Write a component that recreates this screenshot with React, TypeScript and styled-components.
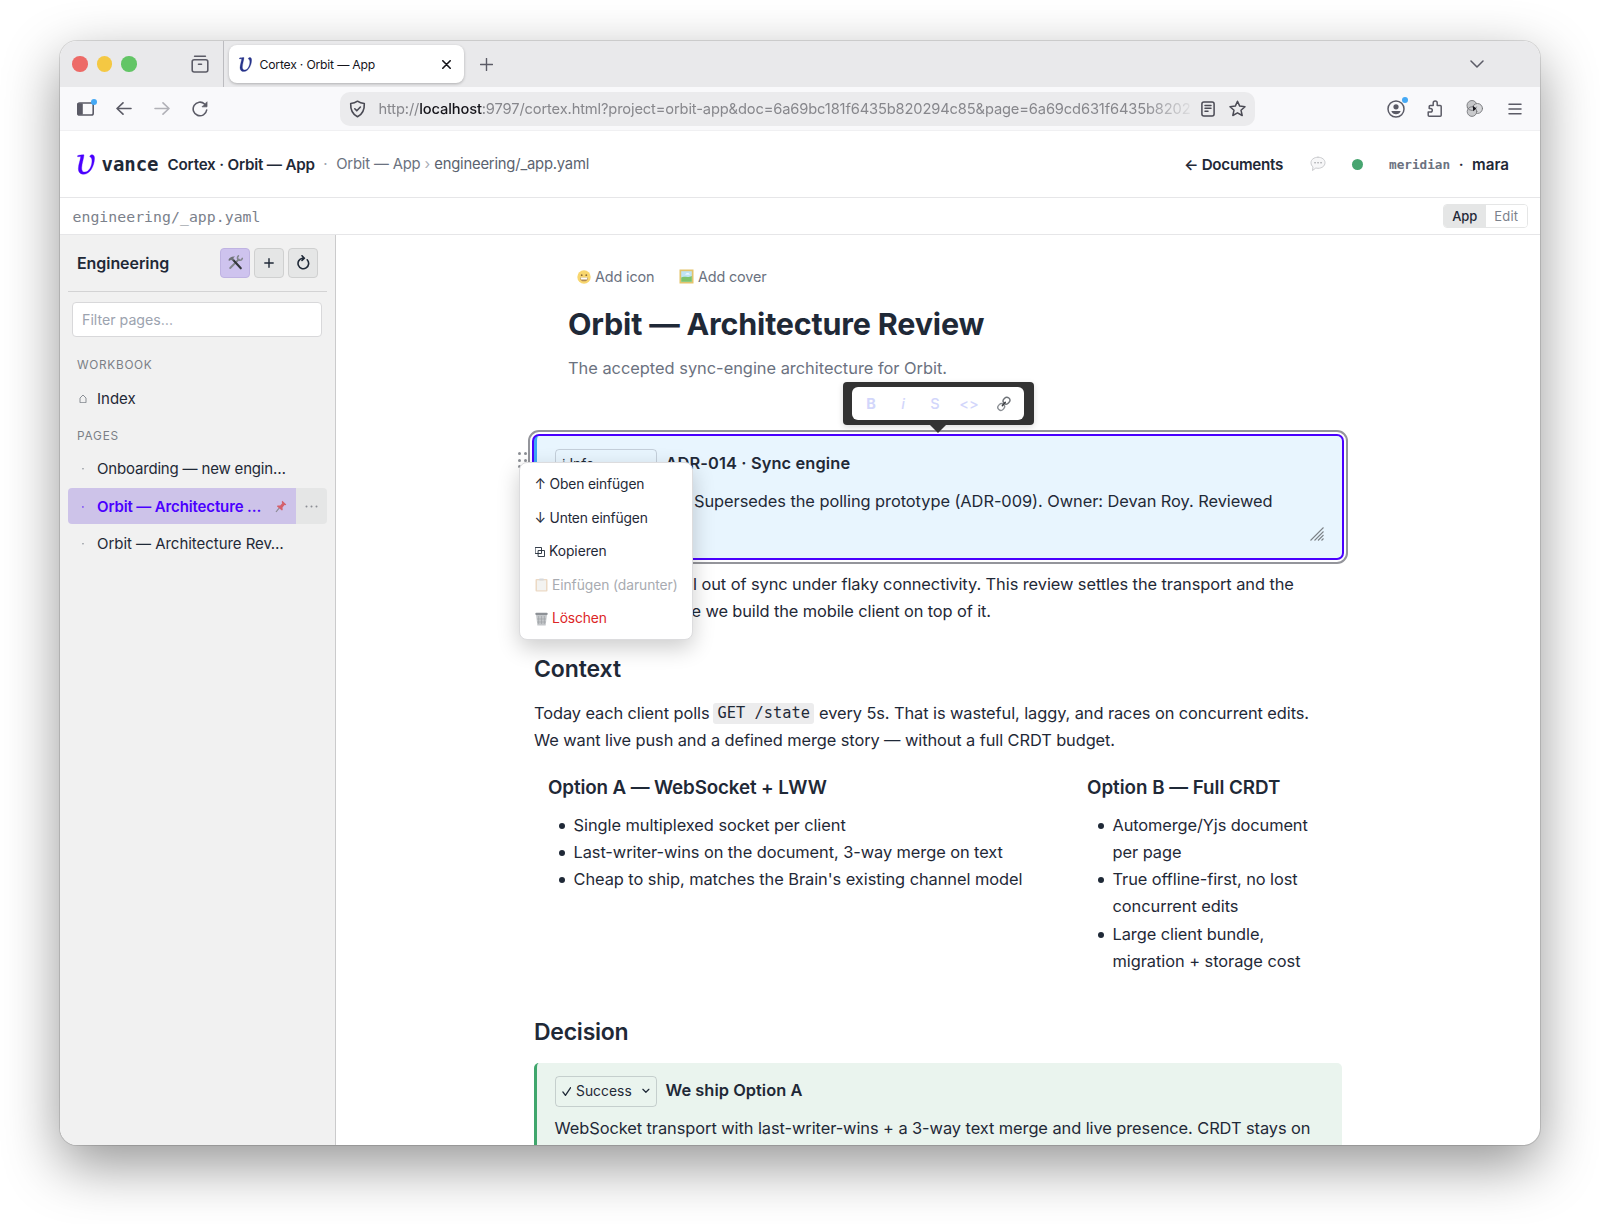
import React from "react";
import styled, { createGlobalStyle, css } from "styled-components";

const sans = `Inter, "Liberation Sans", sans-serif`;
const mono = `"DejaVu Sans Mono", monospace`;
const ink = "#1f2937";
const muted = "#6b7280";
const violet = "#4a00ff";

const GlobalStyle = createGlobalStyle`
  *, *::before, *::after { box-sizing: border-box; }
  body { margin: 0; background: #fff; font-family: ${sans}; color: ${ink}; }
`;

const Stage = styled.div`
  width: 1600px;
  height: 1224px;
  padding: 41px 60px 79px;
  overflow: hidden;
`;
const Window = styled.div`
  height: 1104px;
  display: flex;
  flex-direction: column;
  border-radius: 17px;
  overflow: hidden;
  background: #fff;
  box-shadow: 0 0 0 1px rgba(0, 0, 0, 0.12), 0 20px 56px rgba(0, 0, 0, 0.42);
`;
const Text = styled.span<{ $ls?: number }>`
  white-space: nowrap;
  letter-spacing: ${(p) => p.$ls ?? 0}px;
`;

/* ---------- tab strip ---------- */
const TabStrip = styled.div`
  flex: none;
  height: 46px;
  display: flex;
  align-items: center;
  background: #e9e9eb;
  padding-left: 12px;
  color: #5b5b66;
`;
const Light = styled.i<{ $c: string }>`
  width: 15.5px;
  height: 15.5px;
  margin-right: 9px;
  border-radius: 50%;
  background: ${(p) => p.$c};
`;
const StripIcon = styled.span<{ $ml?: string }>`
  display: flex;
  margin-left: ${(p) => p.$ml ?? "0"};
`;
const StripRule = styled.i`
  width: 1px;
  height: 46px;
  margin: 0 5px 0 14px;
  background: #bcbcc0;
`;
const Tab = styled.div`
  width: 235px;
  height: 38px;
  padding: 0 13px 0 10px;
  display: flex;
  align-items: center;
  gap: 8px;
  border-radius: 8px;
  background: #fff;
  box-shadow: 0 1px 3px rgba(0, 0, 0, 0.25);
  color: #15141a;
  font-size: 12.2px;
`;
const Push = styled.i`
  flex: 1;
`;

/* ---------- nav bar ---------- */
const NavBar = styled.div`
  flex: none;
  height: 43px;
  padding: 0 18px 0 17px;
  display: flex;
  align-items: center;
  background: #f9f9fb;
  color: #5b5b66;
`;
const NavIcon = styled.span<{ $mr?: number; $faint?: boolean }>`
  position: relative;
  display: flex;
  margin-right: ${(p) => p.$mr ?? 0}px;
  opacity: ${(p) => (p.$faint ? 0.45 : 1)};
`;
const Ping = styled.i`
  position: absolute;
  right: -3px;
  top: -3px;
  width: 6.5px;
  height: 6.5px;
  border-radius: 50%;
  background: #45a9f5;
`;
const UrlBar = styled.div`
  width: 915px;
  height: 34px;
  margin: 0 auto 0 0;
  padding: 0 9px 0 9px;
  display: flex;
  align-items: center;
  border-radius: 10px;
  background: #ebebed;
  font-size: 14.7px;
  color: #87878c;
`;
const UrlIcon = styled(NavIcon)`
  color: #4a4a54;
`;
const Url = styled.div`
  width: 815px;
  margin: 0 7px 0 12.5px;
  overflow: hidden;
  white-space: nowrap;
  mask-image: linear-gradient(90deg, #000 765px, transparent 818px);
`;
const Host = styled.b`
  font-weight: 500;
  color: #15141a;
`;

/* ---------- app header ---------- */
const AppHeader = styled.header`
  flex: none;
  height: 68px;
  padding: 0 31px 0 17px;
  display: flex;
  align-items: center;
  border-top: 1px solid #f0f0f2;
  border-bottom: 1px solid #e6e6e8;
`;
const Brand = styled.span`
  margin: 0 9px 0 6.5px;
  font: 700 19px ${mono};
`;
const HeadText = styled(Text)<{ $c?: string; $ml?: number }>`
  font-size: 14.8px;
  color: ${(p) => p.$c ?? ink};
  margin-left: ${(p) => p.$ml ?? 0}px;
`;
const HeadStrong = styled(HeadText)`
  font-size: 15.2px;
  font-weight: 600;
`;
const OnlineDot = styled.i`
  width: 11px;
  height: 11px;
  margin: 0 26px 0 26px;
  border-radius: 50%;
  background: #47a570;
`;
const Tenant = styled.span`
  font: 700 12.7px ${mono};
  color: ${muted};
`;

/* ---------- file bar ---------- */
const FileBar = styled.div`
  flex: none;
  height: 37px;
  padding: 0 12px 0 12.5px;
  display: flex;
  align-items: center;
  justify-content: space-between;
  border-bottom: 1px solid #e6e6e8;
  font: 14.8px ${mono};
  color: #7b818b;
`;
const Toggle = styled.div`
  display: flex;
  height: 24px;
  border: 1px solid #e5e6e6;
  border-radius: 4px;
  overflow: hidden;
  font-family: ${sans};
  font-size: 13px;
`;
const ToggleItem = styled.span<{ $on?: boolean }>`
  width: 41.5px;
  display: flex;
  align-items: center;
  justify-content: center;
  background: ${(p) => (p.$on ? "#e5e6e6" : "#fff")};
  color: ${(p) => (p.$on ? ink : "#7b818b")};
  font-weight: ${(p) => (p.$on ? 500 : 400)};
`;

/* ---------- body ---------- */
const Body = styled.div`
  flex: 1;
  min-height: 0;
  display: flex;
`;
const Sidebar = styled.aside`
  flex: none;
  width: 276px;
  padding: 0 8px;
  background: #f1f1f1;
  border-right: 1px solid #cbcbcc;
`;
const SideHead = styled.div`
  height: 57px;
  padding: 0 9px 1px;
  display: flex;
  align-items: center;
  gap: 4px;
  border-bottom: 1.5px solid #d3d3d4;
`;
const SideTitle = styled(Text)`
  margin-right: auto;
  font-size: 16px;
  font-weight: 600;
`;
const ToolButton = styled.button<{ $on?: boolean }>`
  width: 30px;
  height: 30px;
  padding: 0;
  display: flex;
  align-items: center;
  justify-content: center;
  border: 1px solid ${(p) => (p.$on ? "#bfb3e2" : "#cfd0d0")};
  border-radius: 4px;
  background: ${(p) => (p.$on ? "#cec3ee" : "#e5e6e6")};
  color: ${ink};
`;
const Filter = styled.div`
  height: 35px;
  margin: 10px 5px 0 4px;
  padding: 0 9px;
  display: flex;
  align-items: center;
  border: 1px solid #d8d8da;
  border-radius: 4px;
  background: #fff;
  color: #9ca3af;
  font-size: 14.2px;
`;
const SideLabel = styled.div<{ $mt: number }>`
  height: 16px;
  line-height: 16px;
  margin: ${(p) => p.$mt}px 0 0 9px;
  font-size: 11.8px;
  color: #7b7f86;
`;
const SideRow = styled.div<{ $on?: boolean; $mt?: number }>`
  height: 36px;
  margin-top: ${(p) => p.$mt ?? 1.7}px;
  display: flex;
  border-radius: 4px;
  overflow: hidden;
  font-size: 15px;
  font-weight: ${(p) => (p.$on ? 600 : 400)};
  color: ${(p) => (p.$on ? violet : ink)};
`;
const RowMain = styled.div<{ $on?: boolean }>`
  flex: 1;
  display: flex;
  align-items: center;
  background: ${(p) => (p.$on ? "#cdc3e9" : "transparent")};
`;
const RowMark = styled.span`
  width: 29px;
  padding-left: 1px;
  display: flex;
  justify-content: center;
  opacity: 0.55;
  font-size: 12px;
`;
const PinSlot = styled.span`
  display: flex;
  margin-left: 14px;
`;
const RowMore = styled.span`
  width: 31px;
  display: flex;
  align-items: center;
  justify-content: center;
  background: #e5e6e6;
`;

/* ---------- document ---------- */
const Main = styled.main`
  flex: 1;
  min-width: 0;
  display: flex;
  justify-content: center;
`;
const Doc = styled.article`
  width: 808px;
  font-size: 16.4px;
  line-height: 27.2px;
`;
const DocHead = styled.div`
  padding: 26px 0 0 34px;
`;
const AddRow = styled.div`
  height: 32px;
  padding-left: 9px;
  display: flex;
  align-items: center;
  font-size: 14.4px;
  color: ${muted};
`;
const AddItem = styled.span`
  display: flex;
  align-items: center;
  gap: 4px;
  margin-right: 24.5px;
`;
const Title = styled.h1`
  height: 44px;
  margin: 9px 0 0;
  line-height: 44px;
  font-size: 30.5px;
  font-weight: 700;
`;
const Lead = styled.p`
  height: 24px;
  margin: 10px 0 56px;
  line-height: 24px;
  color: ${muted};
`;
const Callout = styled.section<{ $kind: "info" | "success" }>`
  position: relative;
  height: 122px;
  margin-top: ${(p) => (p.$kind === "success" ? 15 : 0)}px;
  padding: 13px 17.5px 0;
  border-left: 3px solid ${(p) => (p.$kind === "info" ? "#3ea6f5" : "#3fa66c")};
  border-radius: 5px;
  background: ${(p) => (p.$kind === "info" ? "#e8f5fe" : "#eaf4ee")};
  ${(p) =>
    p.$kind === "info" &&
    css`
      box-shadow: 0 0 0 2px ${violet};
      outline: 2px solid #94959b;
      outline-offset: 4px;
    `}
`;
const CalloutHead = styled.div`
  height: 31px;
  display: flex;
  gap: 9px;
`;
const Kind = styled.span`
  width: 102px;
  height: 31px;
  padding: 0 6px;
  display: flex;
  align-items: center;
  gap: 5px;
  border: 1px solid rgba(31, 41, 55, 0.18);
  border-radius: 4px;
  font-size: 13.8px;
`;
const CalloutTitle = styled(Text)`
  font-weight: 600;
  line-height: 28px;
`;
const Line = styled.div<{ $mt?: number }>`
  display: flex;
  height: 27.2px;
  margin-top: ${(p) => p.$mt ?? 0}px;
  white-space: pre;
`;
const Indent = styled.i<{ $w: number }>`
  flex: none;
  width: ${(p) => p.$w}px;
`;
const ResizeGrip = styled.svg`
  position: absolute;
  right: 18px;
  bottom: 17px;
`;
const H2 = styled.h2<{ $mt: number }>`
  height: 32px;
  margin: ${(p) => p.$mt}px 0 0;
  line-height: 32px;
  font-size: 23px;
  font-weight: 600;
`;
const Code = styled.code`
  height: 21px;
  margin: 3px 5px 0 4px;
  padding: 0 4px;
  border-radius: 3px;
  background: #ececed;
  font: 15.3px/21px ${mono};
`;
const Columns = styled.div`
  display: flex;
  gap: 52px;
  height: 201px;
  margin-top: 19.6px;
  padding: 0 14px;
`;
const Column = styled.div<{ $w: number }>`
  width: ${(p) => p.$w}px;
`;
const H3 = styled.h3`
  height: 28px;
  margin: 0 0 10px;
  line-height: 28px;
  font-size: 18.8px;
  font-weight: 600;
`;
const List = styled.ul`
  margin: 0;
  padding: 0;
  list-style: none;
`;
const Item = styled.li`
  display: flex;
  &::before {
    content: "";
    flex: none;
    width: 6px;
    height: 6px;
    margin: 11px 9px 0 10.5px;
    border-radius: 50%;
    background: ${ink};
  }
`;
const ItemBody = styled.div`
  display: flex;
  flex-direction: column;
  letter-spacing: -0.06px;
`;

/* ---------- overlays ---------- */
const DragDots = styled.div`
  position: absolute;
  left: -19.5px;
  top: 16px;
  display: grid;
  grid-template-columns: 3px 3px;
  gap: 3.6px 3px;
`;
const DragDot = styled.i`
  width: 3px;
  height: 3px;
  border-radius: 50%;
  background: #8c8f95;
`;
const Bubble = styled.div`
  position: absolute;
  left: 305.5px;
  top: -54px;
  width: 191px;
  height: 43px;
  padding: 5px 9.5px;
  border-radius: 4px;
  background: #333;
  box-shadow: 0 2px 6px rgba(0, 0, 0, 0.14);
  &::after {
    content: "";
    position: absolute;
    left: 87.5px;
    top: 43px;
    border: 8px solid transparent;
    border-top-color: #333;
    border-bottom-width: 0;
  }
`;
const BubbleInner = styled.div`
  height: 33px;
  padding: 0 3px;
  display: grid;
  grid-template-columns: 32px 32px 32px 36px 33px;
  align-items: center;
  justify-items: center;
  border-radius: 6px;
  background: #fff;
  color: #d2d6fb;
  font-size: 14.5px;
  font-weight: 500;
  line-height: 33px;
`;
const Menu = styled.div`
  position: absolute;
  z-index: 2;
  left: -18px;
  top: 26px;
  width: 174px;
  height: 178px;
  padding: 5px 0;
  border: 1px solid #dcdcde;
  border-radius: 8px;
  background: #fff;
  box-shadow: 0 8px 22px rgba(0, 0, 0, 0.2);
  font-size: 13.8px;
`;
const MenuItem = styled.div<{ $tone?: string; $gap?: number }>`
  height: 33.5px;
  padding-left: 14.5px;
  display: flex;
  align-items: center;
  gap: ${(p) => p.$gap ?? 4.5}px;
  color: ${(p) => p.$tone ?? ink};
`;

/* ---------- drawings ---------- */
const Svg = ({ w, h = w, sw = 1.5, children }: { w: number; h?: number; sw?: number; children: React.ReactNode }) => (
  <svg width={w} height={h} viewBox={`0 0 ${w} ${h}`} fill="none" stroke="currentColor" strokeWidth={sw} strokeLinecap="round" strokeLinejoin="round">
    {children}
  </svg>
);
const Logo = ({ w, h, color }: { w: number; h: number; color: string }) => (
  <svg width={w} height={h} viewBox="0 0 18.500 21" fill={color} stroke={color} strokeWidth=".35">
    <path d="M.6 1.4C2 .9 4.600.6 7.200.6 7 4.500 4.900 9.500 4.800 14c0 3 1.100 4.300 3.300 4.300 4.200 0 7.200-6 7.300-11.300 0-2.300-.6-3.700-2.400-4.700C13.400 1 14.700.4 15.800.5c1.700.2 2.300 1.900 2.200 4.100C17.700 12 13.300 20.500 7.200 20.500 3.300 20.500 1.300 18.500 1.400 14.600 1.500 10.500 3.500 6 3.800 2.400L.6 2.500z" />
  </svg>
);
const Tools = () => (
  <svg width="17" height="17" viewBox="0 0 17 17" fill="none" strokeLinecap="round">
    <path d="M3.200 14 11.800 5.400" stroke="#82868b" strokeWidth="1.900" />
    <path d="M11.400 1.800c-1.500 1.300-1.200 4 .9 4.300 1.300.3 2.600-.4 3-1.700" stroke="#82868b" strokeWidth="1.600" />
    <path d="m6.500 6.300 7.300 8" stroke="#34373b" strokeWidth="2.100" />
    <path d="M1.300 6.200C2.300 3.600 4.600 2.300 8 2.600L6.300 4l.9 1.700-1.500 1.400-1.600-1.300-1.500 1z" fill="#6d7176" />
  </svg>
);
const Smile = () => (
  <svg width="14" height="14" viewBox="0 0 14 14">
    <circle cx="7" cy="7" r="6.700" fill="#f8d66e" />
    <circle cx="4.700" cy="5.200" r=".9" fill="#8a6a3a" />
    <circle cx="9.300" cy="5.200" r=".9" fill="#8a6a3a" />
    <path d="M3 7.400h8c0 2.600-1.700 3.900-4 3.900S3 10 3 7.400z" fill="#b08a55" />
    <path d="M3.500 7.600h7l-.5 1.900H4z" fill="#fff" />
  </svg>
);
const Frame = () => (
  <svg width="15" height="15" viewBox="0 0 15 15">
    <rect x=".5" y=".5" width="14" height="14" fill="#e3c46b" />
    <rect x="2.200" y="2.200" width="10.600" height="10.600" fill="#bfe3f2" />
    <path d="M2.200 8.500c3-2 6 .8 10.600-1.500v5.800H2.200z" fill="#7fc469" />
    <path d="M6 5.500c2-2 4-1 5 0z" fill="#fff" />
  </svg>
);
const Pin = () => (
  <svg width="12" height="13" viewBox="0 0 12 13">
    <path d="m1 12 4-5" stroke="#8c8a94" strokeWidth="1.200" />
    <path d="m7.300.8 4 3.600-1 .8-.8-.2-2 2.400.2 2.600-.8.6L1.800 6.200l.8-.7 2.600.1 2-2.300-.5-1.200z" fill="#d4606b" />
  </svg>
);
const Link = () => (
  <Svg w={16} sw={1.4}>
    <rect x="7" y="1.700" width="7" height="6" rx="3" transform="rotate(-48 10.500 4.700)" stroke="#6f7378" />
    <rect x="1.700" y="8" width="7" height="6" rx="3" transform="rotate(-48 5.200 11)" stroke="#8b8f94" />
    <path d="m6.300 9.700 3-3.500" stroke="#3a3d41" />
  </Svg>
);
const Chat = () => (
  <Svg w={16} sw={1}>
    <path d="M8 1.200c4 0 7 2.300 7 5.500s-3 5.600-7 5.600c-.8 0-1.500-.1-2.200-.3L2.500 14.500l.5-3.600C1.700 9.900 1 8.400 1 6.700c0-3.200 3-5.500 7-5.500z" fill="#f7f7f8" stroke="#c9cacd" />
    <path d="M5 6.700h.1M8 6.700h.1M11 6.700h.1" stroke="#9b9da2" strokeWidth={1.5} />
  </Svg>
);
const Clipboard = () => (
  <svg width="13" height="14" viewBox="0 0 13 14">
    <rect x=".5" y="1" width="12" height="12.500" rx="1" fill="#ecd9c4" />
    <rect x="2" y="2.300" width="9" height="10" fill="#f3f3f1" />
    <rect x="4" y=".4" width="5" height="2" rx="1" fill="#d7d9dc" />
  </svg>
);
const Bin = () => (
  <svg width="13" height="14" viewBox="0 0 13 14">
    <path d="M1 2.500h11l-1.400 11H2.400z" fill="#c3c6c9" />
    <path d="M3.600 4v8M6.500 4v8M9.400 4v8M2 7h9M2.300 10h8.500" stroke="#9a9ea3" strokeWidth=".6" />
    <rect x=".3" y=".8" width="12.400" height="2.200" rx="1" fill="#8d9196" />
  </svg>
);
const Copies = () => (
  <Svg w={10} sw={0.9}>
    <rect x=".5" y=".5" width="6" height="6" />
    <rect x="3.500" y="3.500" width="6" height="6" />
  </Svg>
);

export default function App() {
  return (
    <>
      <GlobalStyle />
      <Stage>
        <Window>
          <TabStrip>
            <Light $c="#ed6a67" />
            <Light $c="#f4c843" />
            <Light $c="#63c566" />
            <StripIcon $ml="45px">
              <Svg w={18} h={18} sw={1.6}>
                <rect x="1.200" y="4.800" width="15.600" height="12.200" rx="2" />
                <path d="M3.600 1.300h10.800M7.500 9.300h3" />
              </Svg>
            </StripIcon>
            <StripRule />
            <Tab>
              <Logo w={13} h={15} color="#27348b" />
              <Text $ls={-0.2}>Cortex · Orbit — App</Text>
              <Push />
              <Svg w={9} sw={1.6}><path d="m.8.8 7.400 7.400M8.200.8.8 8.200" /></Svg>
            </Tab>
            <StripIcon $ml="16px"><Svg w={13} sw={1.4}><path d="M6.500.5v12M.5 6.500h12" /></Svg></StripIcon>
            <Push />
            <StripIcon><Svg w={14} h={8} sw={1.5}><path d="m1 1 6 6 6-6" /></Svg></StripIcon>
            <Indent $w={56.5} />
          </TabStrip>

          <NavBar>
            <NavIcon $mr={21.5}>
              <Svg w={17} h={14} sw={1.6}>
                <rect x=".8" y="1" width="15.400" height="12" rx="1.800" />
                <path d="M1 2h4v10H1z" fill="currentColor" />
              </Svg>
              <Ping />
            </NavIcon>
            <NavIcon $mr={22.5}><Svg w={16} h={13} sw={1.6}><path d="M15 6.500H1M7 .8 1 6.500l6 5.700" /></Svg></NavIcon>
            <NavIcon $mr={22} $faint><Svg w={16} h={13} sw={1.6}><path d="M1 6.500h14M9 .8l6 5.700-6 5.700" /></Svg></NavIcon>
            <NavIcon $mr={132}>
              <Svg w={16} sw={1.6}>
                <path d="M14.700 9A6.800 6.800 0 1 1 12.600 3" />
                <path d="M15 1.200v4.600h-4.600z" fill="currentColor" strokeWidth={0.8} />
              </Svg>
            </NavIcon>
            <UrlBar>
              <UrlIcon><Svg w={17} h={18} sw={1.6}><path d="M8.500 1.200c2 1.500 4 2.200 6.800 2.300.3 6-1.300 10.500-6.800 13.300C3 14 1.400 9.500 1.700 3.500c2.800-.1 4.800-.8 6.800-2.300zM5.800 8.800l2 2 3.600-3.800" /></Svg></UrlIcon>
              <Url>
                <Text $ls={-0.145}>http://<Host>localhost</Host>:9797/cortex.html?project=orbit-app&amp;doc=6a69bc181f6435b820294c85&amp;page=6a69cd631f6435b8202</Text>
              </Url>
              <UrlIcon $mr={14.5}><Svg w={14} h={16} sw={1.5}><rect x=".9" y=".9" width="12.200" height="14.200" rx="2" /><path d="M4 4.500h6M4 7.300h6M4 10.200h3" /></Svg></UrlIcon>
              <UrlIcon><Svg w={17} sw={1.5}><path d="m8.500 1.200 2.200 4.900 5.300.6-4 3.500 1.200 5.300-4.700-2.700-4.700 2.700L5 10.200 1 6.700l5.300-.6z" /></Svg></UrlIcon>
            </UrlBar>
            <NavIcon $mr={22}>
              <Svg w={18} sw={1.5}>
                <circle cx="9" cy="9" r="8" />
                <circle cx="9" cy="6.800" r="2.600" fill="currentColor" stroke="none" />
                <path d="M4.300 11h9.400c-.8 2.200-2.500 3.300-4.700 3.300S5.100 13.200 4.300 11z" fill="currentColor" stroke="none" />
              </Svg>
              <Ping />
            </NavIcon>
            <NavIcon $mr={24}>
              <Svg w={15} h={17} sw={1.5}>
                <path d="M2.200 16.200h11a1 1 0 0 0 1-1V6.500a1 1 0 0 0-1-1h-3V3a2 2 0 0 0-4 0v2.500h-3a1 1 0 0 0-1 1v2h1.300a1.700 1.700 0 0 1 0 3.600H1.200v3.100a1 1 0 0 0 1 1z" />
              </Svg>
            </NavIcon>
            <NavIcon $mr={25}>
              <Svg w={17} h={17} sw={0.9}>
                <g stroke="#77787c">
                  <circle cx="6" cy="5.500" r="5" fill="#c5c6c8" />
                  <circle cx="11.500" cy="8.500" r="5" fill="#d6d7d9" />
                  <circle cx="6" cy="11.600" r="4.800" fill="#c9cacc" />
                  <path d="M1.300 7.500a5 5 0 0 0 9.300-.5" />
                </g>
                <path d="m6.800 5.800 3.500 2.700-3.100 2.700z" fill="#15141a" stroke="none" />
              </Svg>
            </NavIcon>
            <NavIcon><Svg w={14} h={12} sw={1.5}><path d="M1 1.200h12M1 6h12M1 10.800h12" /></Svg></NavIcon>
          </NavBar>

          <AppHeader>
            <Logo w={18} h={21} color={violet} />
            <Brand><Text $ls={-0.04}>vance</Text></Brand>
            <HeadStrong $ls={-0.2}>Cortex · Orbit — App</HeadStrong>
            <HeadText $c="#9ca3af" $ml={8.5}>·</HeadText>
            <HeadText $c={muted} $ml={8.5} $ls={-0.15}>Orbit — App</HeadText>
            <HeadText $c="#a9adb5" $ml={4}>›</HeadText>
            <HeadText $c="#5b6370" $ml={4} $ls={-0.2}>engineering/_app.yaml</HeadText>
            <Push />
            <HeadStrong $ls={-0.28}>← Documents</HeadStrong>
            <Indent $w={27} />
            <Chat />
            <OnlineDot />
            <Tenant>meridian</Tenant>
            <HeadStrong $ml={8.5}>·</HeadStrong>
            <HeadStrong $ml={8.5}>mara</HeadStrong>
          </AppHeader>

          <FileBar>
            <Text $ls={0.044}>engineering/_app.yaml</Text>
            <Toggle>
              <ToggleItem $on><Text $ls={-0.1}>App</Text></ToggleItem>
              <ToggleItem><Text $ls={0.2}>Edit</Text></ToggleItem>
            </Toggle>
          </FileBar>

          <Body>
            <Sidebar>
              <SideHead>
                <SideTitle $ls={-0.07}>Engineering</SideTitle>
                <ToolButton $on><Tools /></ToolButton>
                <ToolButton><Svg w={10} sw={1.4}><path d="M5 .8v8.400M.8 5h8.400" /></Svg></ToolButton>
                <ToolButton><Svg w={14} h={15} sw={1.6}><path d="M11.200 4.800A5.300 5.300 0 1 1 6.500 3.200H8M6 .8l2.400 2.400L6 5.500" /></Svg></ToolButton>
              </SideHead>
              <Filter><Text>Filter pages…</Text></Filter>
              <SideLabel $mt={19.5}><Text $ls={0.7}>WORKBOOK</Text></SideLabel>
              <SideRow $mt={7.5}>
                <RowMain>
                  <RowMark><Svg w={8} h={9} sw={0.9}><path d="M1 8.300V4L4 1l3 3v4.300z" /></Svg></RowMark>
                  <Text>Index</Text>
                </RowMain>
              </SideRow>
              <SideLabel $mt={11.5}><Text $ls={0.82}>PAGES</Text></SideLabel>
              <SideRow $mt={7}><RowMain><RowMark>·</RowMark><Text $ls={-0.18}>Onboarding — new engin…</Text></RowMain></SideRow>
              <SideRow $on>
                <RowMain $on><RowMark>·</RowMark><Text $ls={-0.13}>Orbit — Architecture …</Text><PinSlot><Pin /></PinSlot></RowMain>
                <RowMore><Svg w={13} h={3} sw={2}><path d="M1.500 1.500h0M6.500 1.500h0M11.500 1.500h0" stroke="#8b8e94" /></Svg></RowMore>
              </SideRow>
              <SideRow><RowMain><RowMark>·</RowMark><Text $ls={-0.04}>Orbit — Architecture Rev…</Text></RowMain></SideRow>
            </Sidebar>

            <Main>
              <Doc>
                <DocHead>
                  <AddRow>
                    <AddItem><Smile /><Text $ls={-0.12}>Add icon</Text></AddItem>
                    <AddItem><Frame /><Text $ls={-0.14}>Add cover</Text></AddItem>
                  </AddRow>
                  <Title><Text $ls={-0.19}>Orbit — Architecture Review</Text></Title>
                  <Lead><Text $ls={-0.01}>The accepted sync-engine architecture for Orbit.</Text></Lead>
                </DocHead>

                <Callout $kind="info">
                  <CalloutHead>
                    <Kind><Text>ℹ Info</Text></Kind>
                    <CalloutTitle $ls={0.12}>ADR-014 · Sync engine</CalloutTitle>
                  </CalloutHead>
                  <Line $mt={7.5}>
                    <Indent $w={139.5} />
                    <Text $ls={-0.055}>Supersedes the polling prototype (ADR-009). Owner: Devan Roy. Reviewed</Text>
                  </Line>
                  <ResizeGrip width="14" height="14" viewBox="0 0 14 14" stroke="#7d8288" strokeWidth="1.100">
                    <path d="M.5 13.500 13.500.5M4.500 13.500l9-9M8 13.500l5.500-5.500M11.500 13.500l2-2" />
                  </ResizeGrip>
                  <DragDots>
                    <DragDot /><DragDot /><DragDot /><DragDot /><DragDot /><DragDot />
                  </DragDots>
                  <Bubble>
                    <BubbleInner>
                      <b>B</b>
                      <i>i</i>
                      <span>S</span>
                      <span>&lt;&gt;</span>
                      <Link />
                    </BubbleInner>
                  </Bubble>
                  <Menu>
                    <MenuItem $gap={3.5}><Text>↑</Text><Text $ls={-0.13}>Oben einfügen</Text></MenuItem>
                    <MenuItem $gap={3.5}><Text>↓</Text><Text $ls={-0.15}>Unten einfügen</Text></MenuItem>
                    <MenuItem><Copies /><Text $ls={-0.04}>Kopieren</Text></MenuItem>
                    <MenuItem $tone="#a8abb1"><Clipboard /><Text $ls={-0.06}>Einfügen (darunter)</Text></MenuItem>
                    <MenuItem $tone="#dc2626"><Bin /><Text $ls={-0.13}>Löschen</Text></MenuItem>
                  </Menu>
                </Callout>

                <Line $mt={13}>
                  <Indent $w={159} />
                  <Text $ls={-0.07}>l out of sync under flaky connectivity. This review settles the transport and the</Text>
                </Line>
                <Line>
                  <Indent $w={157.5} />
                  <Text $ls={-0.115}>e we build the mobile client on top of it.</Text>
                </Line>

                <H2 $mt={27.5}><Text $ls={-0.09}>Context</Text></H2>
                <Line $mt={15}>
                  <Text $ls={-0.088}>Today each client polls</Text>
                  <Code><Text $ls={0.04}>GET /state</Text></Code>
                  <Text $ls={-0.086}>every 5s. That is wasteful, laggy, and races on concurrent edits.</Text>
                </Line>
                <Line><Text $ls={-0.094}>We want live push and a defined merge story — without a full CRDT budget.</Text></Line>

                <Columns>
                  <Column $w={487}>
                    <H3><Text $ls={-0.12}>Option A — WebSocket + LWW</Text></H3>
                    <List>
                      <Item><Text $ls={-0.055}>Single multiplexed socket per client</Text></Item>
                      <Item><Text $ls={-0.075}>Last-writer-wins on the document, 3-way merge on text</Text></Item>
                      <Item><Text $ls={-0.06}>Cheap to ship, matches the Brain's existing channel model</Text></Item>
                    </List>
                  </Column>
                  <Column $w={241}>
                    <H3><Text $ls={-0.03}>Option B — Full CRDT</Text></H3>
                    <List>
                      <Item><ItemBody><Text $ls={-0.11}>Automerge/Yjs document</Text><Text $ls={-0.06}>per page</Text></ItemBody></Item>
                      <Item><ItemBody><Text $ls={-0.08}>True offline-first, no lost</Text><Text $ls={-0.06}>concurrent edits</Text></ItemBody></Item>
                      <Item><ItemBody><Text $ls={-0.06}>Large client bundle,</Text><Text $ls={-0.05}>migration + storage cost</Text></ItemBody></Item>
                    </List>
                  </Column>
                </Columns>

                <H2 $mt={40.8}><Text $ls={-0.25}>Decision</Text></H2>
                <Callout $kind="success">
                  <CalloutHead>
                    <Kind>
                      <Svg w={11} h={11} sw={1.5}><path d="m1 6 3 4 6-9" /></Svg>
                      <Text $ls={0.05}>Success</Text>
                      <Push />
                      <Svg w={9} h={6} sw={1.4}><path d="m1 1 3.500 3.500L8 1" /></Svg>
                    </Kind>
                    <CalloutTitle $ls={0.03}>We ship Option A</CalloutTitle>
                  </CalloutHead>
                  <Line $mt={8}><Text $ls={-0.07}>WebSocket transport with last-writer-wins + a 3-way text merge and live presence. CRDT stays on</Text></Line>
                </Callout>
              </Doc>
            </Main>
          </Body>
        </Window>
      </Stage>
    </>
  );
}
